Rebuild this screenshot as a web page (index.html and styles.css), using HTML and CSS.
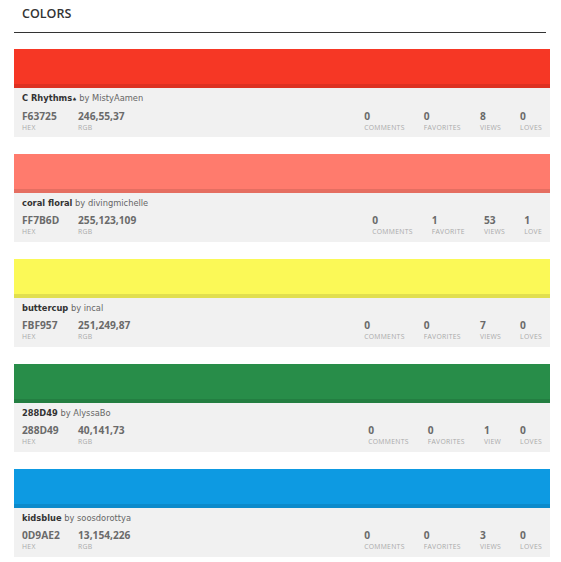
FILE: index.html
```html
<!DOCTYPE html>
<html>
<head>
<meta charset="utf-8">
<link rel="stylesheet" href="styles.css">
</head>
<body>
<div class="page">
  <h2 class="title">COLORS</h2>

  <div class="card">
    <div class="swatch" style="background:#F63725"></div>
    <div class="info">
      <div class="name"><b>C Rhythms<span class="sym">♠</span></b> by MistyAamen</div>
      <div class="row">
        <div class="code hex"><span class="val">F63725</span><span class="lbl">HEX</span></div>
        <div class="code"><span class="val">246,55,37</span><span class="lbl">RGB</span></div>
        <div class="stats">
          <div class="stat"><span class="val">0</span><span class="lbl">COMMENTS</span></div>
          <div class="stat"><span class="val">0</span><span class="lbl">FAVORITES</span></div>
          <div class="stat"><span class="val">8</span><span class="lbl">VIEWS</span></div>
          <div class="stat"><span class="val">0</span><span class="lbl">LOVES</span></div>
        </div>
      </div>
    </div>
  </div>

  <div class="card">
    <div class="swatch" style="background:#FF7B6D"></div>
    <div class="info">
      <div class="name"><b>coral floral</b> by divingmichelle</div>
      <div class="row">
        <div class="code hex"><span class="val">FF7B6D</span><span class="lbl">HEX</span></div>
        <div class="code"><span class="val">255,123,109</span><span class="lbl">RGB</span></div>
        <div class="stats">
          <div class="stat"><span class="val">0</span><span class="lbl">COMMENTS</span></div>
          <div class="stat"><span class="val">1</span><span class="lbl">FAVORITE</span></div>
          <div class="stat"><span class="val">53</span><span class="lbl">VIEWS</span></div>
          <div class="stat"><span class="val">1</span><span class="lbl">LOVE</span></div>
        </div>
      </div>
    </div>
  </div>

  <div class="card">
    <div class="swatch" style="background:#FBF957"></div>
    <div class="info">
      <div class="name"><b>buttercup</b> by incal</div>
      <div class="row">
        <div class="code hex"><span class="val">FBF957</span><span class="lbl">HEX</span></div>
        <div class="code"><span class="val">251,249,87</span><span class="lbl">RGB</span></div>
        <div class="stats">
          <div class="stat"><span class="val">0</span><span class="lbl">COMMENTS</span></div>
          <div class="stat"><span class="val">0</span><span class="lbl">FAVORITES</span></div>
          <div class="stat"><span class="val">7</span><span class="lbl">VIEWS</span></div>
          <div class="stat"><span class="val">0</span><span class="lbl">LOVES</span></div>
        </div>
      </div>
    </div>
  </div>

  <div class="card">
    <div class="swatch" style="background:#288D49"></div>
    <div class="info">
      <div class="name"><b>288D49</b> by AlyssaBo</div>
      <div class="row">
        <div class="code hex"><span class="val">288D49</span><span class="lbl">HEX</span></div>
        <div class="code"><span class="val">40,141,73</span><span class="lbl">RGB</span></div>
        <div class="stats">
          <div class="stat"><span class="val">0</span><span class="lbl">COMMENTS</span></div>
          <div class="stat"><span class="val">0</span><span class="lbl">FAVORITES</span></div>
          <div class="stat"><span class="val">1</span><span class="lbl">VIEW</span></div>
          <div class="stat"><span class="val">0</span><span class="lbl">LOVES</span></div>
        </div>
      </div>
    </div>
  </div>

  <div class="card">
    <div class="swatch" style="background:#0D9AE2"></div>
    <div class="info">
      <div class="name"><b>kidsblue</b> by soosdorottya</div>
      <div class="row">
        <div class="code hex"><span class="val">0D9AE2</span><span class="lbl">HEX</span></div>
        <div class="code"><span class="val">13,154,226</span><span class="lbl">RGB</span></div>
        <div class="stats">
          <div class="stat"><span class="val">0</span><span class="lbl">COMMENTS</span></div>
          <div class="stat"><span class="val">0</span><span class="lbl">FAVORITES</span></div>
          <div class="stat"><span class="val">3</span><span class="lbl">VIEWS</span></div>
          <div class="stat"><span class="val">0</span><span class="lbl">LOVES</span></div>
        </div>
      </div>
    </div>
  </div>
</div>
</body>
</html>
```

FILE: styles.css
```css
* { box-sizing: border-box; }
html, body { margin: 0; padding: 0; background: #fff; }
body {
  font-family: "Open Sans", "DejaVu Sans", sans-serif;
  color: #333;
}
.page {
  padding: 6px 11px 0 14px;
}
.title {
  margin: 0 4px 16px 0;
  padding: 0 8px 10px;
  font-size: 12.5px;
  line-height: 16px;
  font-weight: 600;
  color: #333;
  border-bottom: 1px solid #333;
}
.card {
  margin-bottom: 17px;
}
.swatch {
  height: 39px;
  box-shadow: inset 0 -4px 0 rgba(0,0,0,0.1);
}
.info {
  background: #f1f1f1;
  height: 49px;
  padding: 3px 8px 0;
}
.name {
  font-family: "DejaVu Sans", sans-serif;
  font-size: 8.3px;
  line-height: 14px;
  color: #666;
  white-space: nowrap;
}
.name b {
  font-weight: 600;
  color: #333;
}
.sym { font-size: 5px; }
.row {
  display: flex;
  align-items: flex-start;
  margin-top: 4px;
}
.code, .stat {
  display: flex;
  flex-direction: column;
}
.hex { width: 56px; }
.val {
  font-size: 10.2px;
  line-height: 13px;
  font-weight: 700;
  color: #6a6a6a;
}
.lbl {
  font-size: 6.8px;
  line-height: 9px;
  letter-spacing: 0.3px;
  color: #aaa;
}
.stats {
  margin-left: auto;
  display: flex;
}
.stat {
  margin-left: 19px;
}
```
